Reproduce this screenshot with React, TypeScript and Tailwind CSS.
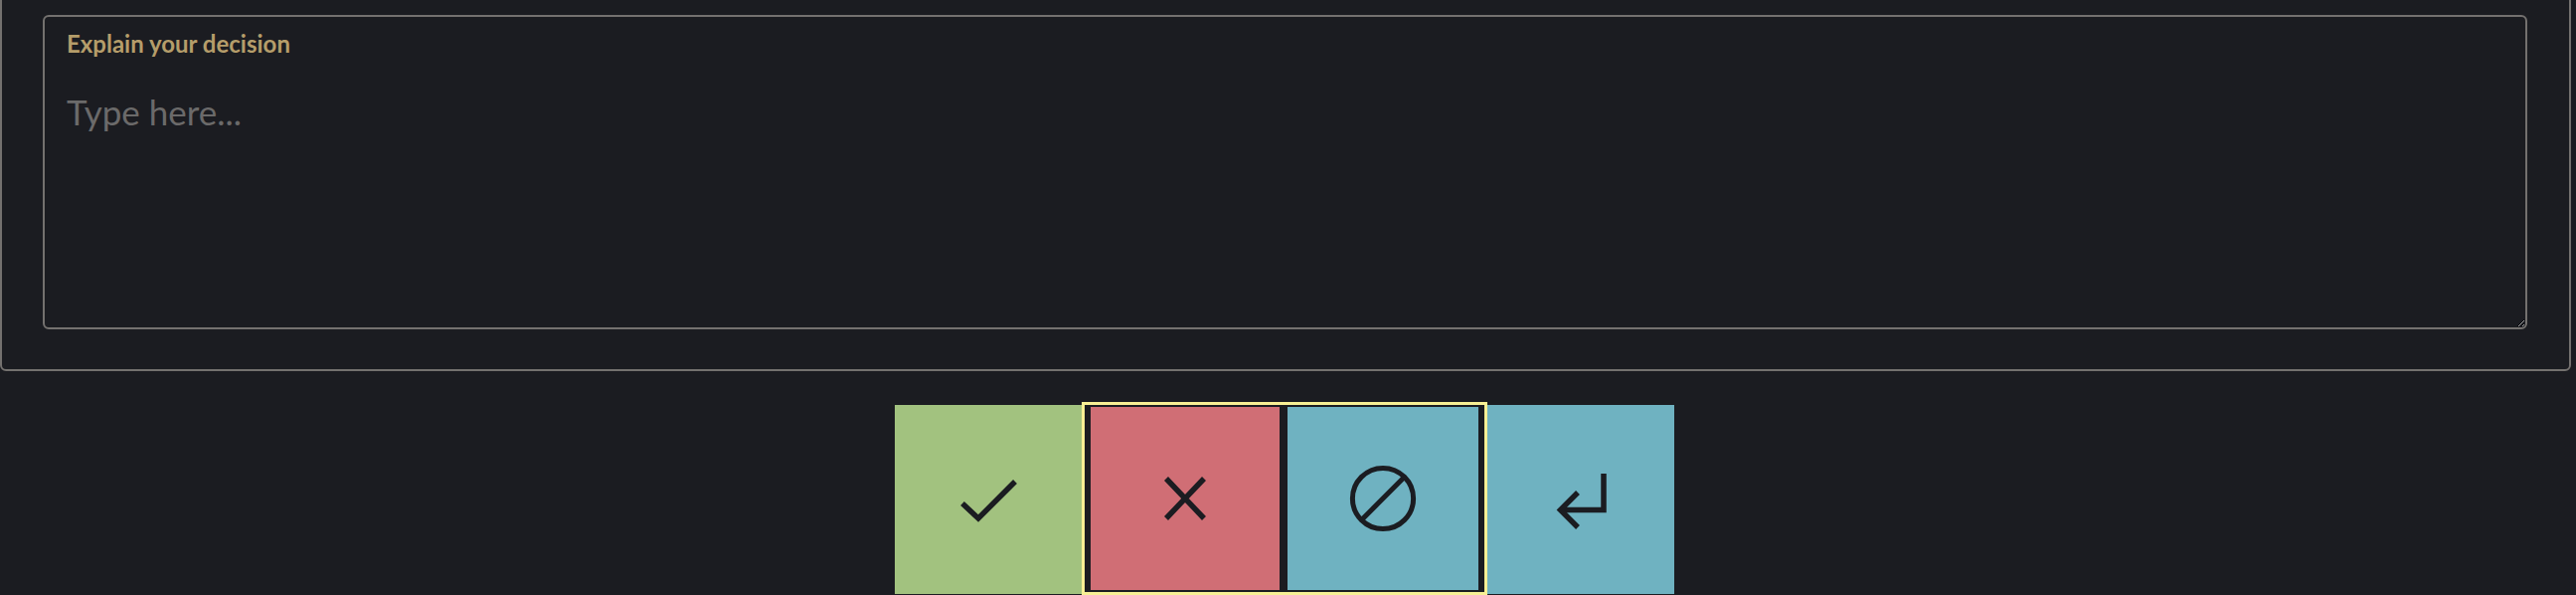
import { useState } from "react";

const font = { fontFamily: "Lato, 'Noto Sans', sans-serif" };

function CheckIcon() {
  return (
    <svg width="80" height="80" viewBox="0 0 80 80" fill="none">
      <polyline points="14,44 30,59 67,22" stroke="#1b1c21" strokeWidth="5.5" strokeLinejoin="miter" />
    </svg>
  );
}

function XIcon() {
  return (
    <svg width="80" height="80" viewBox="0 0 80 80" fill="none">
      <path d="M21 20 59 60M59 20 21 60" stroke="#1b1c21" strokeWidth="5.5" />
    </svg>
  );
}

function BanIcon() {
  return (
    <svg width="80" height="80" viewBox="0 0 80 80" fill="none">
      <circle cx="40" cy="40" r="30.6" stroke="#1b1c21" strokeWidth="5" />
      <path d="M61.7 18.3 18.3 61.7" stroke="#1b1c21" strokeWidth="5" />
    </svg>
  );
}

function EnterIcon() {
  return (
    <svg width="80" height="80" viewBox="0 0 80 80" fill="none">
      <polyline points="63,14 63,50.5 20,50.5" stroke="#1b1c21" strokeWidth="5.5" strokeLinejoin="miter" />
      <polyline points="37,33 19.5,50.5 37,68" stroke="#1b1c21" strokeWidth="5.5" strokeLinejoin="miter" />
    </svg>
  );
}

export default function App() {
  const [text, setText] = useState("");

  return (
    <div className="min-h-[598px] bg-[#1b1c21] overflow-hidden" style={font}>
      <div className="-mt-[20px] mr-[5px] border-2 border-[#74716f] rounded-[6px] pt-[33px] pb-[40px] pl-[41px] pr-[42px]">
        <div className="relative">
          <label className="absolute left-[24px] top-[17px] text-[24px] font-bold text-[#b59d6a] leading-none">
            Explain your decision
          </label>
          <textarea
            value={text}
            onChange={(e) => setText(e.target.value)}
            placeholder="Type here..."
            className="block w-full h-[316px] bg-transparent border-2 border-[#74716f] rounded-[6px] pl-[22px] pt-[69px] text-[35px] text-gray-200 placeholder:text-[#6b6a6a] outline-none"
            style={font}
          />
        </div>
      </div>

      <div className="flex justify-center items-start gap-[3px] mt-[34px] pr-[7px]">
        <button className="w-[188px] h-[190px] bg-[#a2c27f] flex items-center justify-center">
          <CheckIcon />
        </button>
        <div className="flex gap-[8px] px-[6px] py-[2px] h-[188px] bg-[#1b1c21] outline-[3px] outline-solid outline-[#f7ef94]">
          <button className="w-[190px] h-full bg-[#d06e75] flex items-center justify-center">
            <XIcon />
          </button>
          <button className="w-[192px] h-full bg-[#6fb2c1] flex items-center justify-center">
            <BanIcon />
          </button>
        </div>
        <button className="w-[188px] h-[190px] bg-[#6fb2c1] flex items-center justify-center">
          <EnterIcon />
        </button>
      </div>
    </div>
  );
}
